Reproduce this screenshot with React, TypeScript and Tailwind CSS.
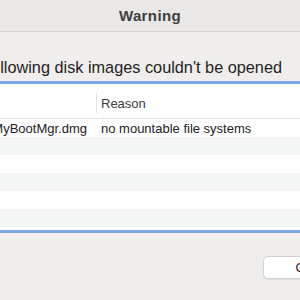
import React from "react";

const rows = [
  { name: "MyBootMgr.dmg", reason: "no mountable file systems" },
  { name: "", reason: "" },
  { name: "", reason: "" },
  { name: "", reason: "" },
  { name: "", reason: "" },
  { name: "", reason: "" },
];

export default function App() {
  return (
    <div className="w-[300px] h-[300px] overflow-hidden bg-[#efeeed] font-['Liberation_Sans',Arial,sans-serif] flex flex-col">
      {/* Title bar */}
      <div className="h-[32px] shrink-0 bg-[#eae8e7] border-b border-[#d9d7d6] flex items-center justify-center">
        <span className="text-[15px] leading-[18px] font-bold tracking-[0.4px] text-[#3e3e3e]">Warning</span>
      </div>

      {/* Message */}
      <div className="pt-[25px] h-[49px] shrink-0">
        <div className="-ml-[46px] whitespace-nowrap text-[16.3px] leading-[20px] text-[#1f1f1f]">
          The following disk images couldn't be opened
        </div>
      </div>

      {/* Table */}
      <div className="shrink-0 border-y-[3px] border-[#7ea7e9] bg-white flex flex-col">
        <div className="h-[35px] border-b border-[#e1e1e1] flex items-start -ml-[9px]">
          <div className="w-[105px] shrink-0" />
          <div className="mt-[9px] w-px h-[20px] bg-[#e3e3e3] shrink-0" />
          <div className="pl-[4px] pt-[12px] text-[13px] leading-[16px] text-[#3a3a3a] whitespace-nowrap">Reason</div>
        </div>
        {rows.map((r, i) => (
          <div
            key={i}
            className={
              "h-[18px] flex items-start pt-[2px] -ml-[9px] text-[13px] leading-[16px] text-[#222222] whitespace-nowrap " +
              (i % 2 === 0 ? "bg-white" : "bg-[#f4f5f5]")
            }
          >
            <div className="w-[106px] shrink-0 text-right pr-[10px]">{r.name}</div>
            <div className="pl-[4px]">{r.reason}</div>
          </div>
        ))}
        <div className="h-[3px] bg-white" />
      </div>

      {/* Buttons */}
      <div className="pt-[23px] pl-[263px] flex">
        <button className="w-[84px] h-[23px] shrink-0 bg-white border border-[#d3d2d1] rounded-[5px] shadow-[0_1px_1px_rgba(0,0,0,0.08)] text-[13px] leading-[21px] text-[#222222] text-center">
          OK
        </button>
      </div>
    </div>
  );
}
